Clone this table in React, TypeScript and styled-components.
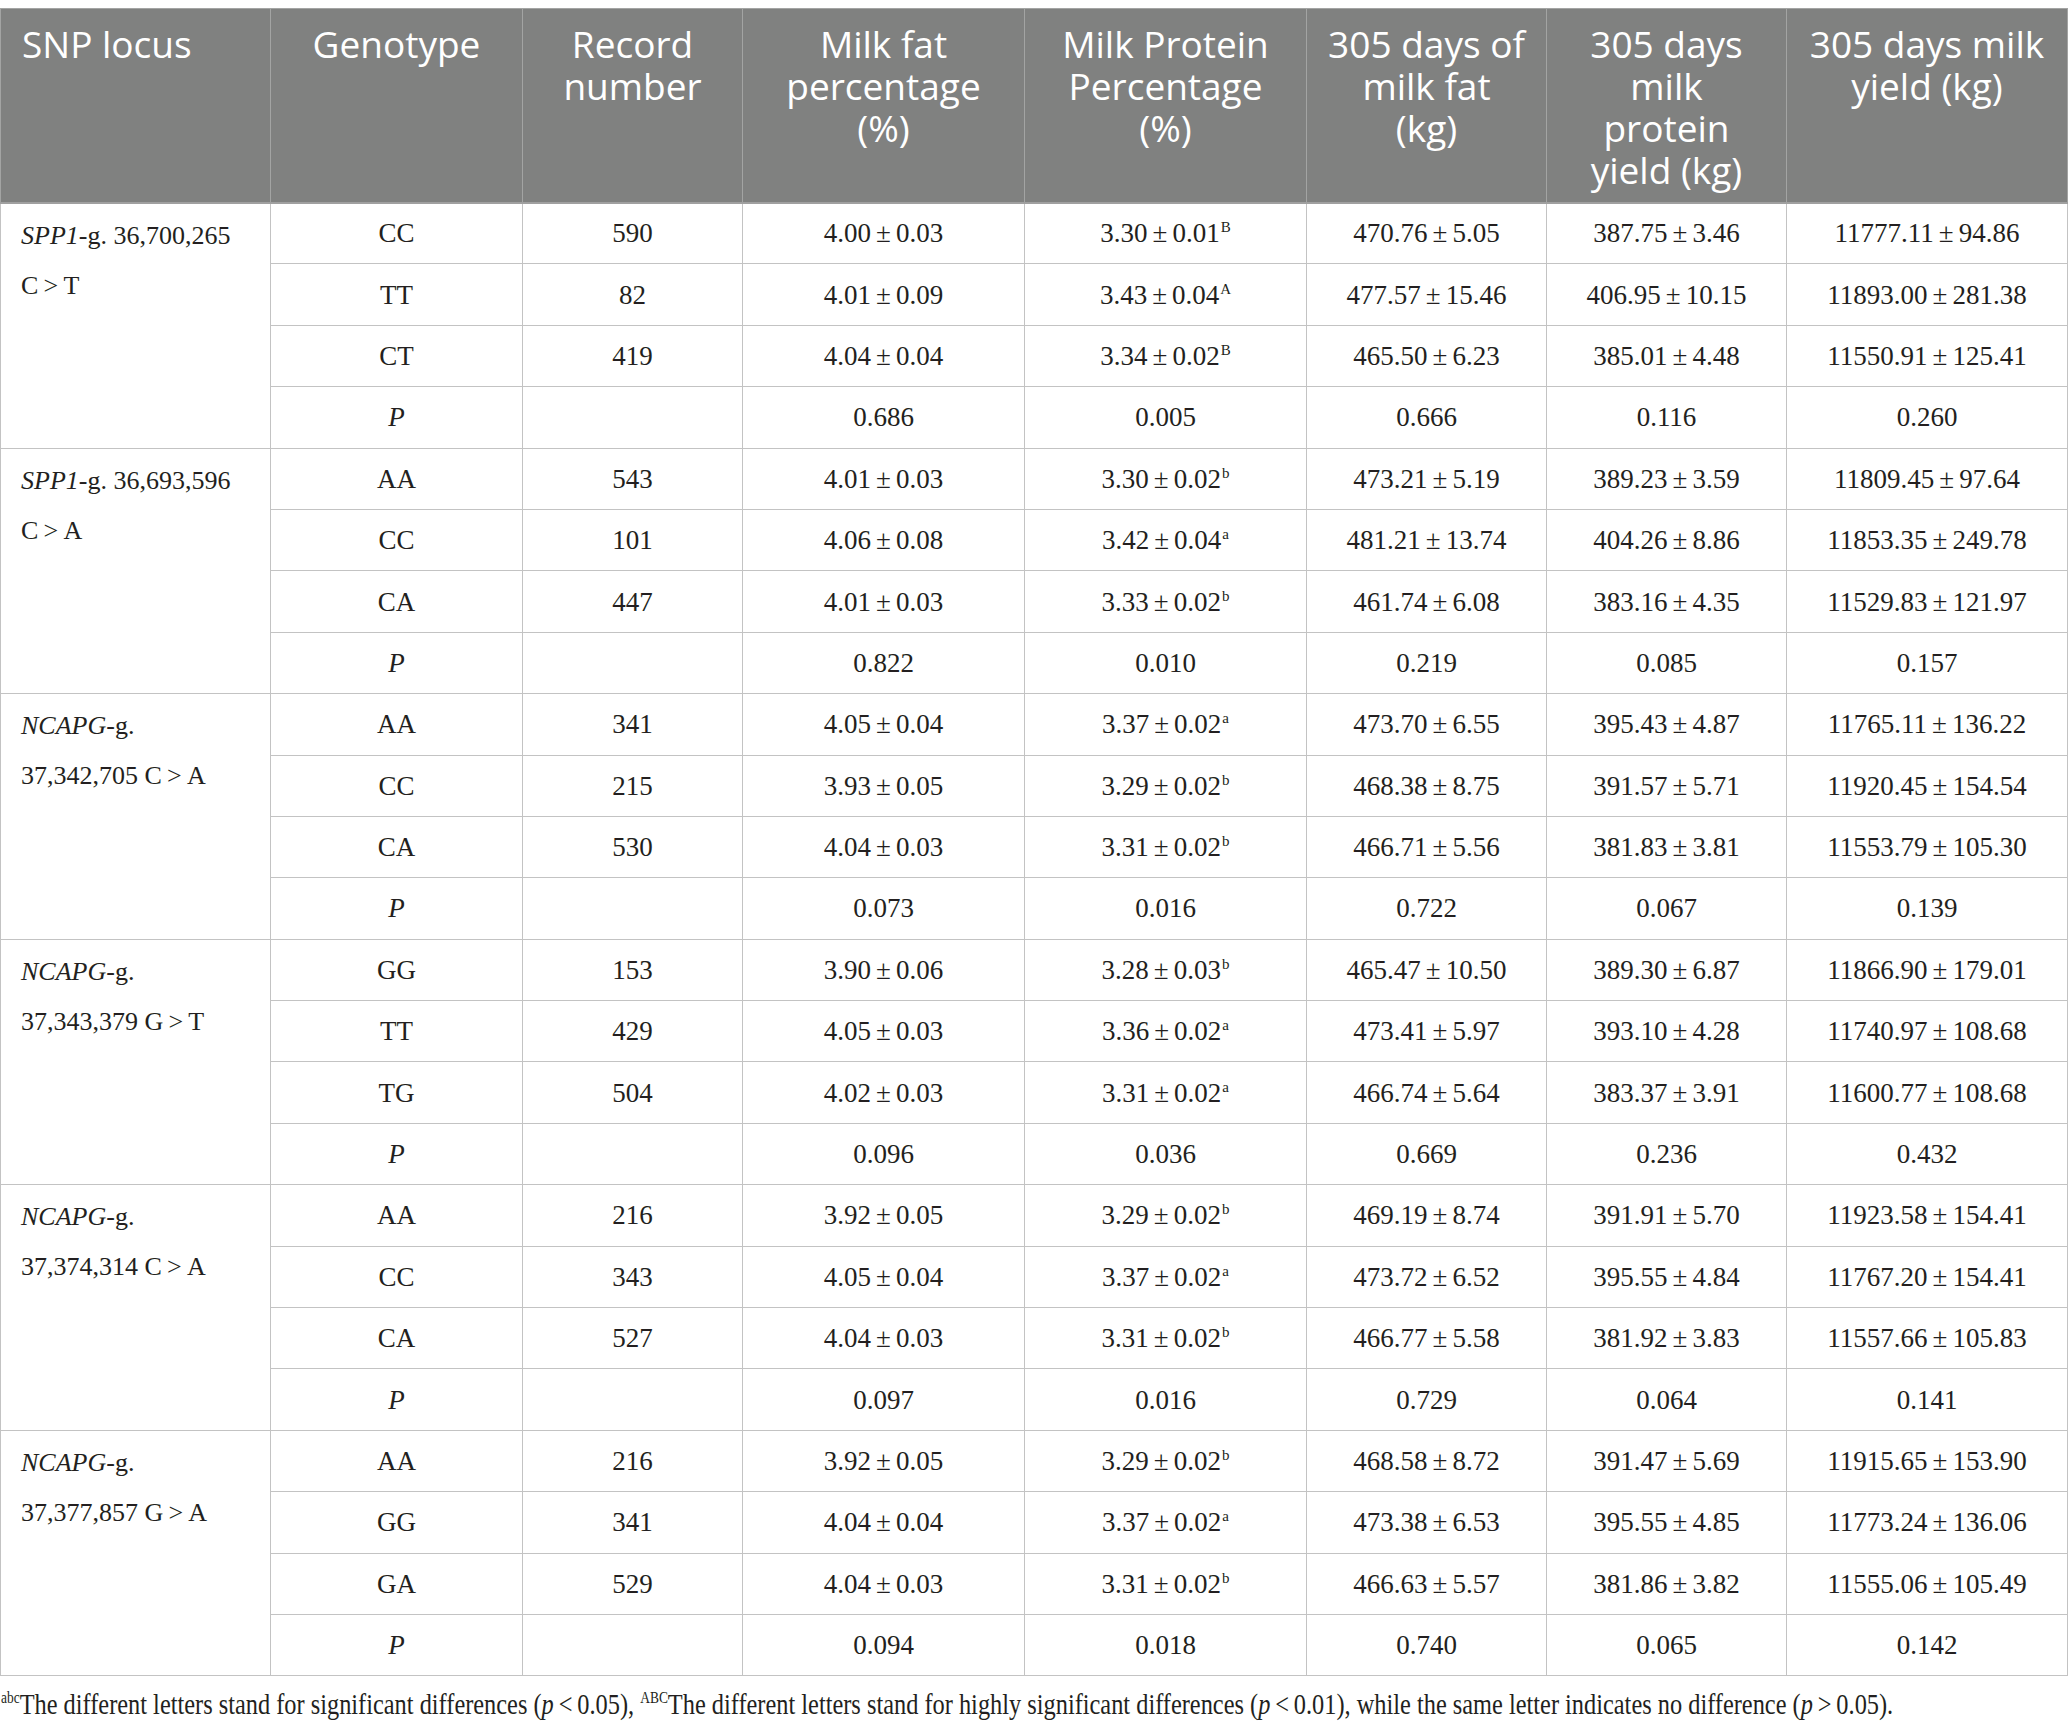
import React from "react";
import styled, { createGlobalStyle } from "styled-components";

const GlobalStyle = createGlobalStyle`
  html, body {
    margin: 0;
    padding: 0;
    background: #ffffff;
  }
  body {
    font-family: "Liberation Serif", "Times New Roman", serif;
    color: #231f20;
  }
`;

const Page = styled.div`
  padding-top: 8px;
  width: 2068px;
`;

const Table = styled.table`
  border-collapse: collapse;
  table-layout: fixed;
  width: 2067px;
  font-family: "Liberation Serif", "Times New Roman", serif;
  font-size: 27px;
  color: #231f20;
`;

const HeadRow = styled.tr`
  height: 194px;
  background: #808180;
`;

const HeadCell = styled.th<{ $left?: boolean }>`
  font-family: "Open Sans", "Noto Sans", sans-serif;
  font-weight: 400;
  font-size: 37px;
  line-height: 42px;
  color: #ffffff;
  text-align: ${(p) => (p.$left ? "left" : "center")};
  vertical-align: top;
  padding: 14px ${(p) => (p.$left ? "10px 8px 21px" : "8px 8px 8px")};
  border: 1px solid #a3a4a3;
  border-bottom: 2px solid #a0a0a0;
`;

const Row = styled.tr`
  height: 61.4px;
`;

const Cell = styled.td`
  text-align: center;
  vertical-align: middle;
  padding: 0 6px;
  border: 1px solid #c3c3c3;
  white-space: nowrap;
  line-height: 30px;
`;

const LocusCell = styled.td`
  text-align: left;
  vertical-align: top;
  padding: 7px 6px 0 20px;
  font-size: 26px;
  line-height: 50px;
  border: 1px solid #c3c3c3;
  white-space: nowrap;
`;

const Gene = styled.i`
  font-style: italic;
`;

const Sup = styled.sup`
  font-size: 15px;
  vertical-align: 10px;
  line-height: 0;
  margin-left: 1px;
`;

const Pm = styled.span`
  margin: 0 5px;
`;

const PLabel = styled.i`
  font-style: italic;
`;

const Footnote = styled.p`
  margin: 10px 0 0 1px;
  font-family: "Liberation Serif", "Times New Roman", serif;
  font-size: 29px;
  line-height: 36px;
  color: #231f20;
  white-space: nowrap;
  transform: scaleX(0.84);
  transform-origin: left center;
`;

const NoteSup = styled.sup`
  font-size: 16px;
  vertical-align: 11px;
  line-height: 0;
`;

type Val = { v: string; s?: string; sup?: string };

type Group = {
  gene: string;
  rest1: string;
  line2: string;
  rows: [string, string, Val, Val, Val, Val, Val][];
  p: string[];
};

const mv = (s: string, sup?: string): Val => {
  const [a, b] = s.split("±");
  return { v: a, s: b, sup };
};

const groups: Group[] = [
  {
    gene: "SPP1",
    rest1: "-g. 36,700,265",
    line2: "C\u2009>\u2009T",
    rows: [
      ["CC", "590", mv("4.00±0.03"), mv("3.30±0.01", "B"), mv("470.76±5.05"), mv("387.75±3.46"), mv("11777.11±94.86")],
      ["TT", "82", mv("4.01±0.09"), mv("3.43±0.04", "A"), mv("477.57±15.46"), mv("406.95±10.15"), mv("11893.00±281.38")],
      ["CT", "419", mv("4.04±0.04"), mv("3.34±0.02", "B"), mv("465.50±6.23"), mv("385.01±4.48"), mv("11550.91±125.41")],
    ],
    p: ["0.686", "0.005", "0.666", "0.116", "0.260"],
  },
  {
    gene: "SPP1",
    rest1: "-g. 36,693,596",
    line2: "C\u2009>\u2009A",
    rows: [
      ["AA", "543", mv("4.01±0.03"), mv("3.30±0.02", "b"), mv("473.21±5.19"), mv("389.23±3.59"), mv("11809.45±97.64")],
      ["CC", "101", mv("4.06±0.08"), mv("3.42±0.04", "a"), mv("481.21±13.74"), mv("404.26±8.86"), mv("11853.35±249.78")],
      ["CA", "447", mv("4.01±0.03"), mv("3.33±0.02", "b"), mv("461.74±6.08"), mv("383.16±4.35"), mv("11529.83±121.97")],
    ],
    p: ["0.822", "0.010", "0.219", "0.085", "0.157"],
  },
  {
    gene: "NCAPG",
    rest1: "-g.",
    line2: "37,342,705 C\u2009>\u2009A",
    rows: [
      ["AA", "341", mv("4.05±0.04"), mv("3.37±0.02", "a"), mv("473.70±6.55"), mv("395.43±4.87"), mv("11765.11±136.22")],
      ["CC", "215", mv("3.93±0.05"), mv("3.29±0.02", "b"), mv("468.38±8.75"), mv("391.57±5.71"), mv("11920.45±154.54")],
      ["CA", "530", mv("4.04±0.03"), mv("3.31±0.02", "b"), mv("466.71±5.56"), mv("381.83±3.81"), mv("11553.79±105.30")],
    ],
    p: ["0.073", "0.016", "0.722", "0.067", "0.139"],
  },
  {
    gene: "NCAPG",
    rest1: "-g.",
    line2: "37,343,379 G\u2009>\u2009T",
    rows: [
      ["GG", "153", mv("3.90±0.06"), mv("3.28±0.03", "b"), mv("465.47±10.50"), mv("389.30±6.87"), mv("11866.90±179.01")],
      ["TT", "429", mv("4.05±0.03"), mv("3.36±0.02", "a"), mv("473.41±5.97"), mv("393.10±4.28"), mv("11740.97±108.68")],
      ["TG", "504", mv("4.02±0.03"), mv("3.31±0.02", "a"), mv("466.74±5.64"), mv("383.37±3.91"), mv("11600.77±108.68")],
    ],
    p: ["0.096", "0.036", "0.669", "0.236", "0.432"],
  },
  {
    gene: "NCAPG",
    rest1: "-g.",
    line2: "37,374,314 C\u2009>\u2009A",
    rows: [
      ["AA", "216", mv("3.92±0.05"), mv("3.29±0.02", "b"), mv("469.19±8.74"), mv("391.91±5.70"), mv("11923.58±154.41")],
      ["CC", "343", mv("4.05±0.04"), mv("3.37±0.02", "a"), mv("473.72±6.52"), mv("395.55±4.84"), mv("11767.20±154.41")],
      ["CA", "527", mv("4.04±0.03"), mv("3.31±0.02", "b"), mv("466.77±5.58"), mv("381.92±3.83"), mv("11557.66±105.83")],
    ],
    p: ["0.097", "0.016", "0.729", "0.064", "0.141"],
  },
  {
    gene: "NCAPG",
    rest1: "-g.",
    line2: "37,377,857 G\u2009>\u2009A",
    rows: [
      ["AA", "216", mv("3.92±0.05"), mv("3.29±0.02", "b"), mv("468.58±8.72"), mv("391.47±5.69"), mv("11915.65±153.90")],
      ["GG", "341", mv("4.04±0.04"), mv("3.37±0.02", "a"), mv("473.38±6.53"), mv("395.55±4.85"), mv("11773.24±136.06")],
      ["GA", "529", mv("4.04±0.03"), mv("3.31±0.02", "b"), mv("466.63±5.57"), mv("381.86±3.82"), mv("11555.06±105.49")],
    ],
    p: ["0.094", "0.018", "0.740", "0.065", "0.142"],
  },
];

const colWidths = [270, 252, 220, 282, 282, 240, 240, 281];

const ValueText: React.FC<{ val: Val }> = ({ val }) => (
  <>
    {val.v}
    <Pm>±</Pm>
    {val.s}
    {val.sup && <Sup>{val.sup}</Sup>}
  </>
);

export default function App() {
  return (
    <Page>
      <GlobalStyle />
      <Table>
        <colgroup>
          {colWidths.map((w, i) => (
            <col key={i} style={{ width: w }} />
          ))}
        </colgroup>
        <thead>
          <HeadRow>
            <HeadCell $left>SNP locus</HeadCell>
            <HeadCell>Genotype</HeadCell>
            <HeadCell>
              Record
              <br />
              number
            </HeadCell>
            <HeadCell>
              Milk fat
              <br />
              percentage
              <br />
              (%)
            </HeadCell>
            <HeadCell>
              Milk Protein
              <br />
              Percentage
              <br />
              (%)
            </HeadCell>
            <HeadCell>
              305 days of
              <br />
              milk fat
              <br />
              (kg)
            </HeadCell>
            <HeadCell>
              305 days
              <br />
              milk
              <br />
              protein
              <br />
              yield (kg)
            </HeadCell>
            <HeadCell>
              305 days milk
              <br />
              yield (kg)
            </HeadCell>
          </HeadRow>
        </thead>
        <tbody>
          {groups.map((g, gi) => (
            <React.Fragment key={gi}>
              {g.rows.map((r, ri) => (
                <Row key={ri}>
                  {ri === 0 && (
                    <LocusCell rowSpan={4}>
                      <Gene>{g.gene}</Gene>
                      {g.rest1}
                      <br />
                      {g.line2}
                    </LocusCell>
                  )}
                  <Cell>{r[0]}</Cell>
                  <Cell>{r[1]}</Cell>
                  {r.slice(2).map((v, vi) => (
                    <Cell key={vi}>
                      <ValueText val={v as Val} />
                    </Cell>
                  ))}
                </Row>
              ))}
              <Row>
                <Cell>
                  <PLabel>P</PLabel>
                </Cell>
                <Cell />
                {g.p.map((pv, pi) => (
                  <Cell key={pi}>{pv}</Cell>
                ))}
              </Row>
            </React.Fragment>
          ))}
        </tbody>
      </Table>
      <Footnote>
        <NoteSup>abc</NoteSup>The different letters stand for significant differences (
        <PLabel>p</PLabel>
        {"\u2009<\u20090.05), "}
        <NoteSup>ABC</NoteSup>The different letters stand for highly significant differences (
        <PLabel>p</PLabel>
        {"\u2009<\u20090.01), while the same letter indicates no difference ("}
        <PLabel>p</PLabel>
        {"\u2009>\u20090.05)."}
      </Footnote>
    </Page>
  );
}
